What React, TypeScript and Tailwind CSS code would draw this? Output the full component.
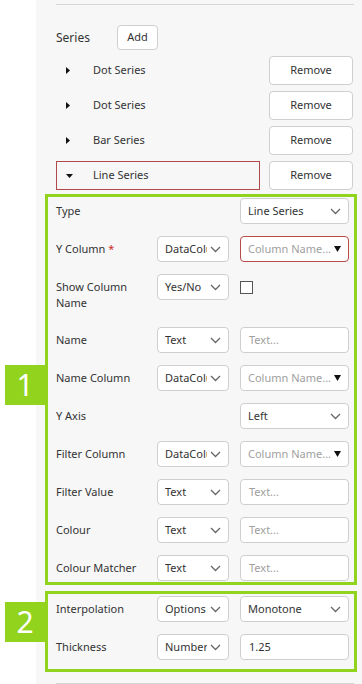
import React from 'react';

const font = { fontFamily: '"Segoe UI", "Noto Sans", sans-serif' };

const Chevron = () => (
  <svg width="11" height="7" viewBox="0 0 11 7" className="shrink-0">
    <polyline points="1,1 5.5,5.5 10,1" fill="none" stroke="#666" strokeWidth="1.3" />
  </svg>
);

const Caret = () => (
  <svg width="7" height="6" viewBox="0 0 7 6" className="shrink-0">
    <polygon points="0,0 7,0 3.5,6" fill="#111" />
  </svg>
);

// select-like box
const Select = ({ value, wide = false, placeholder = false, danger = false, caret = false }) => (
  <div
    className={`flex h-[26px] items-center gap-[3px] rounded-[4px] border bg-white pl-[7px] pr-[7px] text-[11px] ${
      wide ? 'w-[109px]' : 'w-[72px]'
    } ${danger ? 'border-[#b94a48]' : 'border-[#cfcfcf]'}`}
  >
    <span className={`flex-1 overflow-hidden whitespace-nowrap ${placeholder ? 'text-[#a0a0a0]' : 'text-[#333]'}`}>
      {value}
    </span>
    {caret ? <Caret /> : <Chevron />}
  </div>
);

const Input = ({ value, placeholder = false }) => (
  <div className="flex h-[26px] w-[109px] items-center rounded-[4px] border border-[#cfcfcf] bg-white pl-[8px] text-[11px]">
    <span className={placeholder ? 'text-[#a0a0a0]' : 'text-[#333]'}>{value}</span>
  </div>
);

const Row = ({ label, children, tall = false }) => (
  <div className={`flex ${tall ? 'items-start' : 'items-center h-[26px]'}`}>
    <div className={`w-[101px] shrink-0 text-[11px] text-[#333] ${tall ? 'pt-[5px] pb-[4px] leading-[16px]' : ''}`}>
      {label}
    </div>
    <div className="flex items-center gap-[11px]">{children}</div>
  </div>
);

const Badge = ({ n, top }) => (
  <div
    className={`absolute left-[5px] flex h-[40px] w-[40px] items-center justify-center bg-[#92d31e] text-[30px] leading-none text-white ${top}`}
  >
    {n}
  </div>
);

const SeriesRow = ({ name, open = false }) => (
  <div className="flex items-center">
    <div
      className={`flex h-[29px] w-[204px] items-center ${
        open ? 'border border-[#b04a4a]' : 'border border-transparent'
      }`}
    >
      <span className="flex w-[36px] pl-[9px]">
        {open ? (
          <svg width="7" height="4" viewBox="0 0 7 4">
            <polygon points="0,0 7,0 3.5,4" fill="#111" />
          </svg>
        ) : (
          <svg width="4" height="7" viewBox="0 0 4 7">
            <polygon points="0,0 4,3.5 0,7" fill="#111" />
          </svg>
        )}
      </span>
      <span className="text-[11px] text-[#333]">{name}</span>
    </div>
    <button className="ml-auto h-[29px] w-[84px] rounded-[4px] border border-[#cfcfcf] bg-white text-[11px] text-[#333]">
      Remove
    </button>
  </div>
);

export default function App() {
  return (
    <div className="relative flex h-[684px] w-[362px] overflow-hidden bg-white" style={font}>
      <div className="w-[36px] shrink-0" />
      <div className="flex flex-1 flex-col bg-[#f7f7f7] pl-[9px] pr-[5px] pt-[4px]">
        <div className="ml-[11px] mr-[3px] h-px bg-[#d6d6d6]" />

        <div className="ml-[11px] mr-[4px] mt-[20px] flex items-center">
          <span className="w-[61px] text-[12px] text-[#333]">Series</span>
          <button className="h-[25px] w-[41px] rounded-[4px] border border-[#cfcfcf] bg-white text-[11px] text-[#333]">
            Add
          </button>
        </div>

        <div className="ml-[11px] mr-[4px] mt-[6px] flex flex-col gap-[6px]">
          <SeriesRow name="Dot Series" />
          <SeriesRow name="Dot Series" />
          <SeriesRow name="Bar Series" />
          <SeriesRow name="Line Series" open />
        </div>

        <div className="mt-[4px] flex flex-col gap-[12px] border-[3px] border-[#92d31e] pb-[1px] pl-[8px] pt-[1px]">
          <Row label="Type">
            <div className="w-[72px]" />
            <Select value="Line Series" wide />
          </Row>
          <Row
            label={
              <>
                Y Column <span className="text-[#c9302c]">*</span>
              </>
            }
          >
            <Select value="DataColumn" />
            <Select value="Column Name..." wide placeholder danger caret />
          </Row>
          <Row label={<>Show Column<br />Name</>} tall>
            <Select value="Yes/No" />
            <div className="mt-[1px] h-[13px] w-[13px] border border-[#555] bg-white" />
          </Row>
          <Row label="Name">
            <Select value="Text" />
            <Input value="Text..." placeholder />
          </Row>
          <Row label="Name Column">
            <Select value="DataColumn" />
            <Select value="Column Name..." wide placeholder caret />
          </Row>
          <Row label="Y Axis">
            <div className="w-[72px]" />
            <Select value="Left" wide />
          </Row>
          <Row label="Filter Column">
            <Select value="DataColumn" />
            <Select value="Column Name..." wide placeholder caret />
          </Row>
          <Row label="Filter Value">
            <Select value="Text" />
            <Input value="Text..." placeholder />
          </Row>
          <Row label="Colour">
            <Select value="Text" />
            <Input value="Text..." placeholder />
          </Row>
          <Row label="Colour Matcher">
            <Select value="Text" />
            <Input value="Text..." placeholder />
          </Row>
        </div>

        <div className="mt-[6px] flex flex-col gap-[12px] border-[3px] border-[#92d31e] pb-[9px] pl-[8px] pt-[2px]">
          <Row label="Interpolation">
            <Select value="Options" />
            <Select value="Monotone" wide />
          </Row>
          <Row label="Thickness">
            <Select value="Number" />
            <Input value="1.25" />
          </Row>
        </div>

        <div className="ml-[11px] mr-[3px] mt-[11px] h-px bg-[#d6d6d6]" />
      </div>

      <Badge n="1" top="top-[365px]" />
      <Badge n="2" top="top-[602px]" />
    </div>
  );
}
